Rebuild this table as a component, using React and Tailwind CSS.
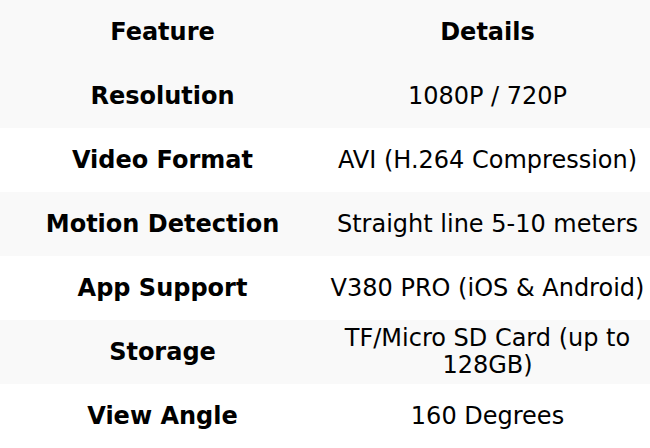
export default function App() {
  const rows = [
    ["Resolution", "1080P / 720P"],
    ["Video Format", "AVI (H.264 Compression)"],
    ["Motion Detection", "Straight line 5-10 meters"],
    ["App Support", "V380 PRO (iOS & Android)"],
    ["Storage", "TF/Micro SD Card (up to 128GB)"],
    ["View Angle", "160 Degrees"],
  ];
  return (
    <div className="w-[650px] h-[448px] bg-white text-black text-[24px] leading-[27px]" style={{ fontFamily: '"DejaVu Sans", sans-serif' }}>
      <div className="grid grid-cols-2 h-16 bg-[#f9f9f9] font-bold">
        <div className="flex items-center justify-center text-center px-1">Feature</div>
        <div className="flex items-center justify-center text-center px-1">Details</div>
      </div>
      {rows.map(([a, b], i) => (
        <div key={a} className={`grid grid-cols-2 h-16 ${i % 2 === 0 ? "bg-[#f9f9f9]" : "bg-white"}`}>
          <div className="flex items-center justify-center text-center px-1 font-bold">{a}</div>
          <div className="flex items-center justify-center text-center px-1">{b}</div>
        </div>
      ))}
    </div>
  );
}
